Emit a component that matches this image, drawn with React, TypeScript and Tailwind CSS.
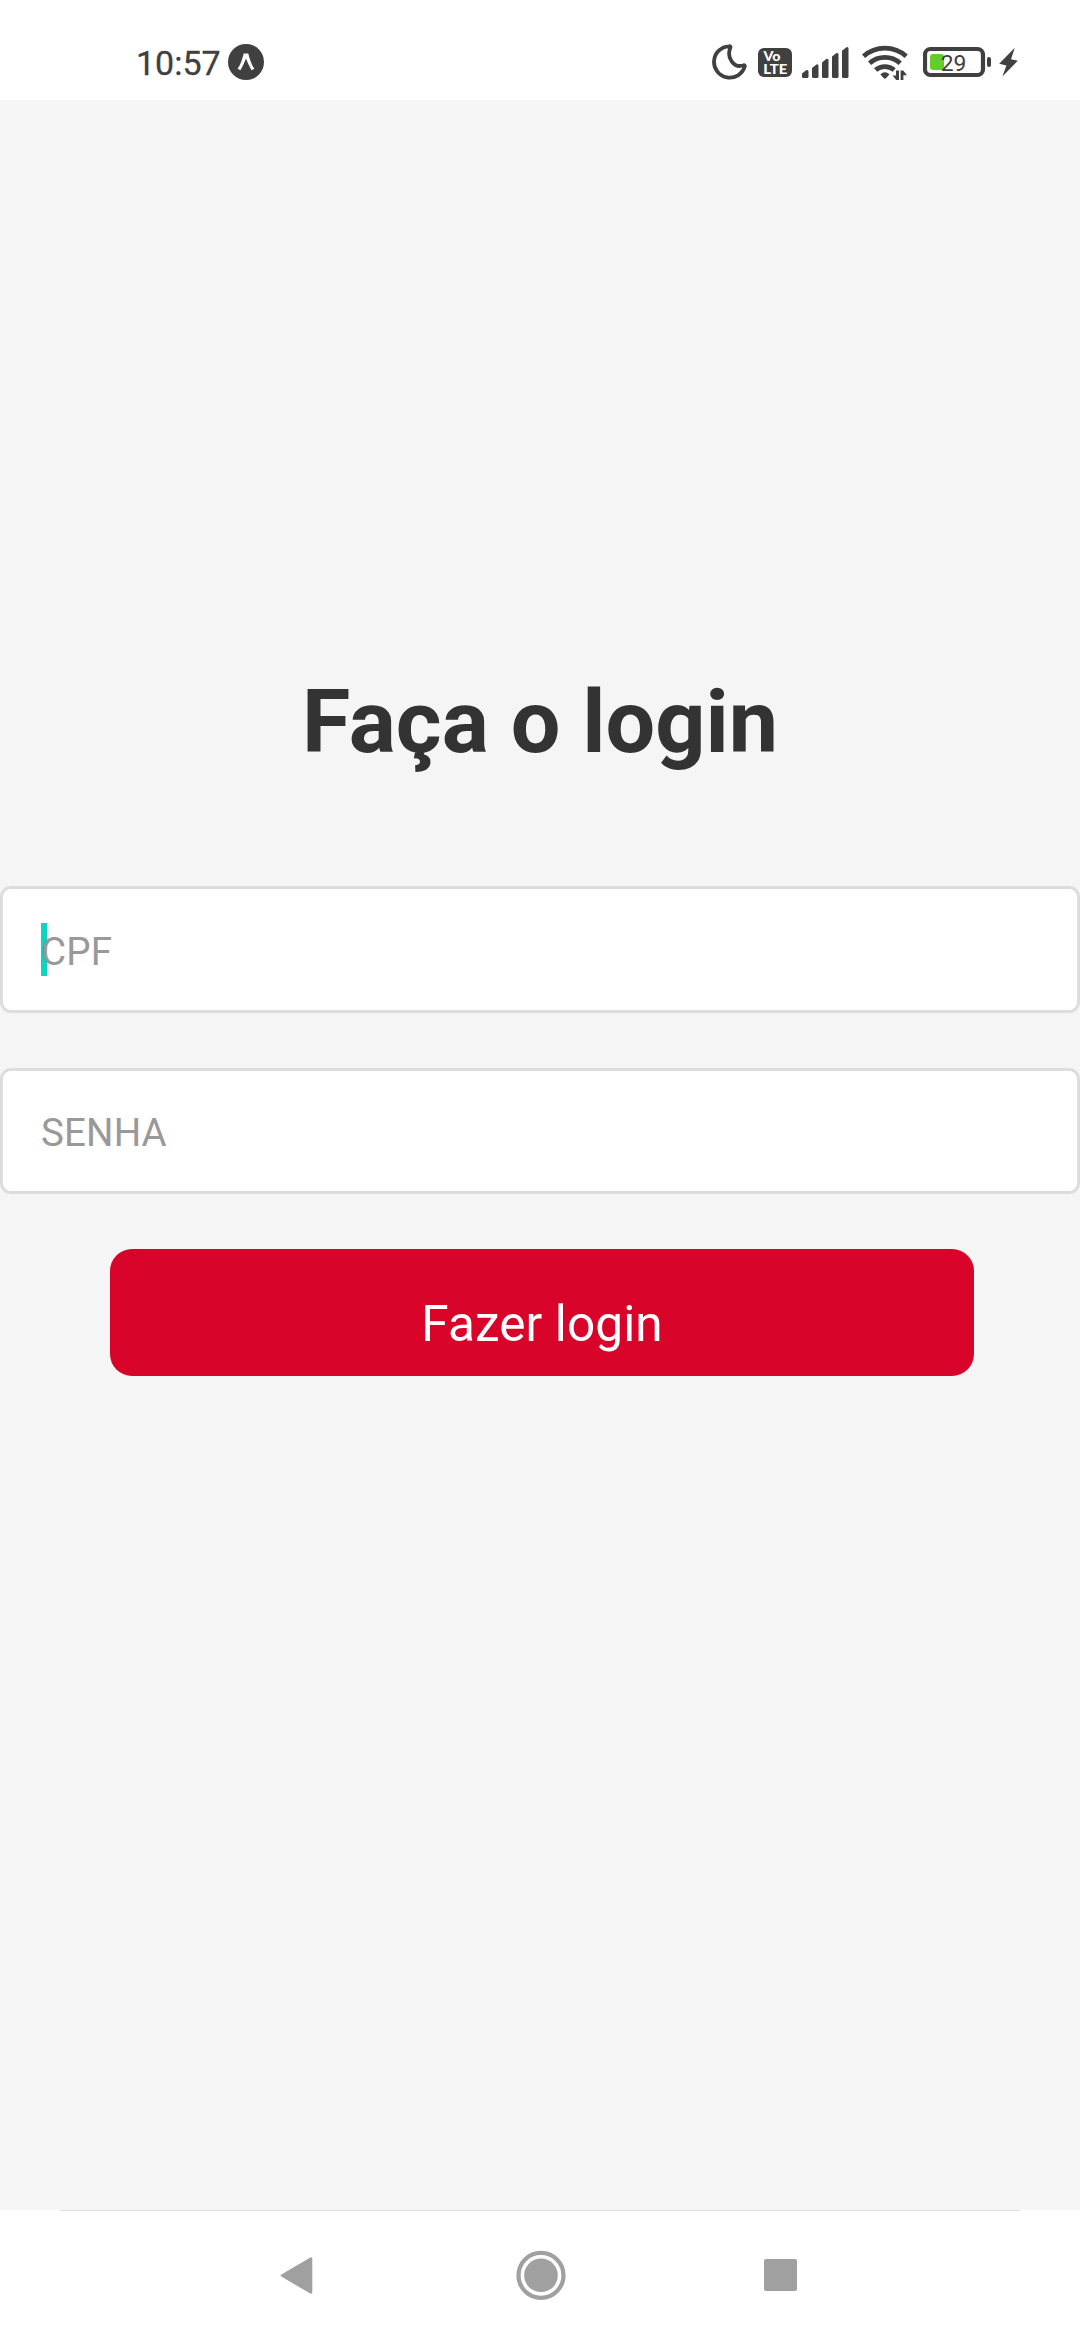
const INK = '#404040';

function ExpoIcon() {
  return (
    <svg width="36" height="36" viewBox="0 0 36 36" className="ml-[8px] mt-[2px]">
      <circle cx="18" cy="18" r="18" fill={INK} />
      <path
        d="M9.6 24.7C12.6 20.5 14.2 15.5 15.7 9.4H20.3C21.8 15.5 23.4 20.5 26.4 24.7L23.6 26.2C21.2 22.6 19.4 18.3 18 14.6C16.6 18.3 14.8 22.6 12.4 26.2Z"
        fill="#fff"
      />
    </svg>
  );
}

function MoonIcon() {
  return (
    <svg width="40" height="40" viewBox="3.4 0 40 40">
      <path
        d="M20.5 4.3A15.7 15.7 0 1 0 36.2 24.3C36.4 23.3 35.7 23 34.9 23.3C25.5 26.5 17.5 16 21.8 5.6C22.1 4.8 21.6 4.1 20.5 4.3Z"
        fill="none"
        stroke={INK}
        strokeWidth="3.8"
        strokeLinejoin="round"
      />
    </svg>
  );
}

function VolteIcon() {
  return (
    <div className="ml-[6px] mt-[6px] h-[29px] w-[34px] rounded-[6px] bg-[#404040]">
      <svg width="34" height="29" viewBox="0 0 34 29" fill="#fff" fontFamily="Lato, sans-serif" fontWeight="900">
        <text x="5.5" y="13.3" fontSize="13" textLength="17" lengthAdjust="spacingAndGlyphs">Vo</text>
        <text x="5.3" y="25.6" fontSize="13.6" textLength="24" lengthAdjust="spacingAndGlyphs">LTE</text>
      </svg>
    </div>
  );
}

function SignalIcon() {
  const bars = [
    { x: 1, y: 28 },
    { x: 11, y: 22.4 },
    { x: 21, y: 16.8 },
    { x: 31, y: 11 },
    { x: 41, y: 5.2 },
  ];
  return (
    <svg width="49" height="40" viewBox="0 0 49 40" className="ml-[9px]">
      {bars.map((b) => (
        <path
          key={b.x}
          d={`M${b.x} ${b.y + 3.6}L${b.x + 4.5} ${b.y}Q${b.x + 6.5} ${b.y - 0.5} ${b.x + 6.5} ${b.y + 1.5}V34.5Q${b.x + 6.5} 36 ${b.x + 5} 36H${b.x + 1.5}Q${b.x} 36 ${b.x} 34.5Z`}
          fill={INK}
        />
      ))}
    </svg>
  );
}

function WifiIcon() {
  return (
    <svg width="48" height="40" viewBox="0 0 48 40" className="ml-[11px]" fill="none" stroke={INK} strokeWidth="4.8">
      <path d="M2.6 14.3A32 32 0 0 1 45.2 14.3" />
      <path d="M8.6 21.2A23 23 0 0 1 39.2 21.2" />
      <path d="M14.6 28A14.5 14.5 0 0 1 33.2 28" />
      <path d="M19.3 32.3Q23.9 28.2 28.5 32.3L25.2 35.9Q23.9 37 22.6 35.9Z" fill={INK} stroke="none" />
      <path d="M38 28.5V38H35.2L31.6 33.4H35V28.5ZM39.6 38V28.5H42.2L46 33.2H42.4V38Z" fill={INK} stroke="none" />
    </svg>
  );
}

function BatteryIcon() {
  return (
    <svg width="69" height="40" viewBox="0 0 69 40" className="ml-[14px]">
      <rect x="2" y="7" width="58" height="26" rx="5.5" fill="none" stroke={INK} strokeWidth="4.2" />
      <rect x="7" y="12" width="14" height="16" rx="3" fill="#66cb2c" />
      <rect x="64" y="15" width="4" height="10" rx="2" fill={INK} />
      <text x="17.8" y="29" fontFamily="Roboto, sans-serif" fontSize="22.8" fill={INK}>29</text>
    </svg>
  );
}

function BoltIcon() {
  return (
    <svg width="20" height="40" viewBox="0 0 20 40" className="ml-[7px]">
      <path d="M15.8 5.7L0.2 21.7L7.4 23.6L3.4 34.4L18.8 18.8L12 17.2Z" fill={INK} />
    </svg>
  );
}

function StatusBar() {
  return (
    <header className="flex h-[100px] shrink-0 items-start bg-white pt-[42px] pr-[61px] pl-[136px]">
      <time className="mt-px w-[84px] text-[34px] leading-[40px] whitespace-nowrap text-[#404040] [-webkit-text-stroke:0.3px_#404040]">
        10:57
      </time>
      <ExpoIcon />
      <div className="ml-auto flex items-start">
        <MoonIcon />
        <VolteIcon />
        <SignalIcon />
        <WifiIcon />
        <BatteryIcon />
        <BoltIcon />
      </div>
    </header>
  );
}

function NavigationBar() {
  return (
    <nav className="h-[130px] shrink-0 bg-white">
      <div className="mx-[60px] h-px bg-[#e2e2e2]" />
      <div className="flex h-[129px] items-start justify-between pt-[39px] pr-[283px] pl-[280px]">
        <svg width="33" height="50" viewBox="0 0 33 50">
          <path d="M2 25.5L31 8.5V42.5Z" fill="#a0a0a0" stroke="#a0a0a0" strokeWidth="2.6" strokeLinejoin="round" />
        </svg>
        <svg width="50" height="50" viewBox="0 0 50 50" className="ml-[4px]">
          <circle cx="25" cy="25.3" r="22.5" fill="none" stroke="#a0a0a0" strokeWidth="4.2" />
          <circle cx="25" cy="25.3" r="16.8" fill="#a0a0a0" />
        </svg>
        <div className="mt-[9px] h-[32px] w-[33px] rounded-[2px] bg-[#a0a0a0]" />
      </div>
    </nav>
  );
}

export default function App() {
  return (
    <div className="flex h-[2340px] w-[1080px] flex-col overflow-hidden bg-[#f5f5f5] font-[Roboto,sans-serif]">
      <StatusBar />
      <main className="flex flex-1 flex-col pt-[570px]">
        <h1 className="text-center text-[88px] leading-[104px] font-bold text-[#333333]">Faça o login</h1>
        <div className="mt-[112px] flex h-[127px] items-center rounded-[11px] border-3 border-[#dddddd] bg-white pt-[4px] pl-[38px]">
          <div className="relative text-[38.5px] leading-[46px] tracking-[0.15px] text-[#999999]">
            <span className="absolute -top-[6px] left-0 h-[53px] w-[6px] bg-[#0cd6c2]" />
            <span className="relative">CPF</span>
          </div>
        </div>
        <div className="mt-[55px] flex h-[126px] items-center rounded-[11px] border-3 border-[#dddddd] bg-white pt-[4px] pl-[38px]">
          <span className="text-[38.5px] leading-[46px] tracking-[0.15px] text-[#999999]">SENHA</span>
        </div>
        <button className="mt-[55px] ml-[110px] h-[127px] w-[864px] rounded-[22px] bg-[#d90429] pt-[22px] text-[49.5px] leading-[58px] tracking-[0.1px] text-white">
          Fazer login
        </button>
      </main>
      <NavigationBar />
    </div>
  );
}
